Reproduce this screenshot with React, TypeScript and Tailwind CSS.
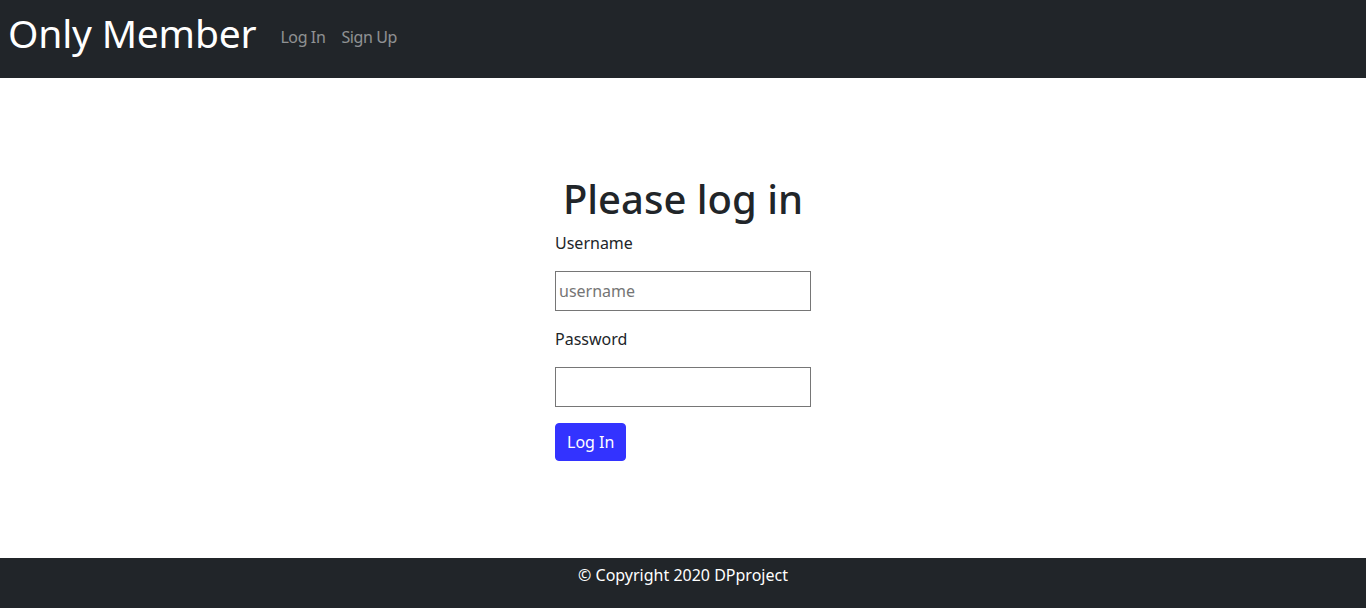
export default function App() {
  return (
    <div
      className="flex min-h-screen flex-col bg-white text-[#212529]"
      style={{ fontFamily: '"Noto Sans", "Open Sans", sans-serif' }}
    >
      <nav className="flex h-[78px] items-center bg-[#212529] px-[8px] pb-[12px]">
        <a href="#" className="mr-[16px] text-[39px] leading-[60px] tracking-[-0.2px] text-white">
          Only Member
        </a>
        <div className="flex pt-[8px]">
          <a href="#" className="px-[8px] text-[16px] leading-[24px] tracking-[-0.4px] text-white/50">
            Log In
          </a>
          <a href="#" className="px-[8px] text-[16px] leading-[24px] tracking-[-0.4px] text-white/50">
            Sign Up
          </a>
        </div>
      </nav>

      <main className="flex flex-1 items-center justify-center">
        <form className="flex w-[256px] flex-col" onSubmit={(e) => e.preventDefault()}>
          <h1 className="mb-[8px] text-center text-[40px] font-medium leading-[48px]">Please log in</h1>
          <label htmlFor="username" className="text-[16px] leading-[24px]">
            Username
          </label>
          <input
            id="username"
            type="text"
            placeholder="username"
            className="mt-[16px] h-[40px] border border-[#767676] px-[3px] text-[16px] placeholder:text-[#757575]"
          />
          <label htmlFor="password" className="mt-[16px] text-[16px] leading-[24px]">
            Password
          </label>
          <input
            id="password"
            type="password"
            className="mt-[16px] h-[40px] border border-[#767676] px-[3px] text-[16px]"
          />
          <div className="mt-[16px]">
            <button
              type="submit"
              className="rounded-[4px] border border-[#3333ff] bg-[#3333ff] px-[11px] py-[6px] text-[16px] leading-[24px] text-white"
            >
              Log In
            </button>
          </div>
        </form>
      </main>

      <footer className="h-[50px] bg-[#212529] pt-[5px] text-center text-[16px] leading-[24px] text-white">
        © Copyright 2020 DPproject
      </footer>
    </div>
  );
}
